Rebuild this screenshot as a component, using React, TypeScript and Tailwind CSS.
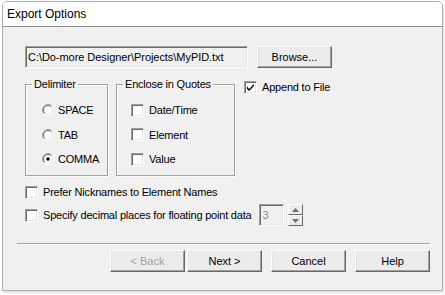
import React from "react";

const btnCls =
  "w-[75px] h-[22px] bg-[#ececec] border border-t-white border-l-white border-b-[#696969] border-r-[#696969] shadow-[inset_-1px_-1px_0_#a0a0a0,inset_1px_1px_0_#e3e3e3] flex items-center justify-center text-[11px] leading-none tracking-normal";

function Radio({ checked }: { checked?: boolean }) {
  return (
    <svg width="12" height="12" viewBox="0 0 12 12" className="shrink-0">
      <circle cx="6" cy="6" r="4.5" fill="#ffffff" />
      <path d="M2.1 9.9 A5.5 5.5 0 0 1 9.9 2.1" fill="none" stroke="#a0a0a0" strokeWidth="1" />
      <path d="M9.9 2.1 A5.5 5.5 0 0 1 2.1 9.9" fill="none" stroke="#ffffff" strokeWidth="1" />
      <path d="M2.8 9.2 A4.5 4.5 0 0 1 9.2 2.8" fill="none" stroke="#696969" strokeWidth="1" />
      <path d="M9.2 2.8 A4.5 4.5 0 0 1 2.8 9.2" fill="none" stroke="#e3e3e3" strokeWidth="1" />
      {checked && <circle cx="6" cy="6" r="1.8" fill="#000000" />}
    </svg>
  );
}

function Check({ checked }: { checked?: boolean }) {
  return (
    <div className="w-[13px] h-[13px] shrink-0 bg-white border border-t-[#a0a0a0] border-l-[#a0a0a0] border-b-white border-r-white shadow-[inset_1px_1px_0_#696969,inset_-1px_-1px_0_#e3e3e3] flex items-center justify-center">
      {checked && (
        <svg width="7" height="7" viewBox="0 0 7 7">
          <path d="M0 2 L0 5 L2 7 L7 2 L7 0 L2 5 Z" fill="#000" />
        </svg>
      )}
    </div>
  );
}

export default function App() {
  return (
    <div
      className="w-[445px] h-[295px] bg-white pt-[1px] pl-[2px] text-black"
      style={{ fontFamily: '"Liberation Sans", Arial, sans-serif' }}
    >
      <div className="w-[441px] h-[290px] border border-[#acacac] rounded-tl-[5px] rounded-tr-[5px] flex flex-col overflow-hidden shadow-[1px_2px_2px_rgba(0,0,0,0.12)]">
        <div className="h-[24px] bg-white pl-[4px] flex items-center text-[12px] border-b border-[#8f8f8f] box-content">
          Export Options
        </div>
        <div className="flex-1 bg-[#f0f0f0] pt-[19px] pl-[14px] pr-[12px] flex flex-col text-[11px] tracking-[-0.2px]">
          <div className="pl-[8px] flex flex-col">
            <div className="flex h-[22px] gap-[9px]">
              <div className="w-[223px] h-[22px] bg-[#f0f0f0] border border-t-[#a0a0a0] border-l-[#a0a0a0] border-b-white border-r-white shadow-[inset_1px_1px_0_#696969,inset_-1px_-1px_0_#e3e3e3] pl-[2px] flex items-center tracking-[-0.05px]">
                C:\Do-more Designer\Projects\MyPID.txt
              </div>
              <div className={btnCls}>Browse...</div>
            </div>
            <div className="flex mt-[10px] gap-[8px] items-start">
              <fieldset className="w-[83px] h-[98px] border border-[#a0a0a0] shadow-[inset_1px_1px_0_#fff,1px_1px_0_#fff] p-0 m-0">
                <legend className="ml-[6px] px-[2px] leading-[13px]">Delimiter</legend>
                <div className="pl-[16px] pt-[7px] flex flex-col">
                  <div className="h-[24.5px] flex items-center gap-[4px]">
                    <Radio />
                    <span>SPACE</span>
                  </div>
                  <div className="h-[24.5px] flex items-center gap-[4px]">
                    <Radio />
                    <span>TAB</span>
                  </div>
                  <div className="h-[24.5px] flex items-center gap-[4px]">
                    <Radio checked />
                    <span>COMMA</span>
                  </div>
                </div>
              </fieldset>
              <fieldset className="w-[119px] h-[98px] border border-[#a0a0a0] shadow-[inset_1px_1px_0_#fff,1px_1px_0_#fff] p-0 m-0">
                <legend className="ml-[6px] px-[2px] leading-[13px]">Enclose in Quotes</legend>
                <div className="pl-[14px] pt-[7px] flex flex-col">
                  <div className="h-[24.5px] flex items-center gap-[5px]">
                    <Check />
                    <span>Date/Time</span>
                  </div>
                  <div className="h-[24.5px] flex items-center gap-[5px]">
                    <Check />
                    <span>Element</span>
                  </div>
                  <div className="h-[24.5px] flex items-center gap-[5px]">
                    <Check />
                    <span>Value</span>
                  </div>
                </div>
              </fieldset>
              <div className="ml-[1px] mt-[1px] flex items-center gap-[5px]">
                <Check checked />
                <span>Append to File</span>
              </div>
            </div>
            <div className="mt-[10px] h-[13px] flex items-center gap-[5px]">
              <Check />
              <span>Prefer Nicknames to Element Names</span>
            </div>
            <div className="mt-[5px] h-[22px] flex items-center">
              <Check />
              <span className="ml-[5px]">Specify decimal places for floating point data</span>
              <div className="ml-[8px] w-[25px] h-[22px] bg-[#f0f0f0] border border-t-[#a0a0a0] border-l-[#a0a0a0] border-b-white border-r-white shadow-[inset_1px_1px_0_#696969,inset_-1px_-1px_0_#e3e3e3] pl-[2px] flex items-center text-[#8a8a8a]">
                3
              </div>
              <div className="ml-[4px] w-[15px] h-[22px] flex flex-col">
                <div className="flex-1 bg-[#ececec] border border-t-white border-l-white border-b-[#696969] border-r-[#696969] flex items-center justify-center">
                  <svg width="7" height="4" viewBox="0 0 7 4">
                    <path d="M3.5 0 L7 4 L0 4 Z" fill="#6d6d6d" />
                  </svg>
                </div>
                <div className="flex-1 bg-[#ececec] border border-t-white border-l-white border-b-[#696969] border-r-[#696969] flex items-center justify-center">
                  <svg width="7" height="4" viewBox="0 0 7 4">
                    <path d="M0 0 L7 0 L3.5 4 Z" fill="#6d6d6d" />
                  </svg>
                </div>
              </div>
            </div>
          </div>
          <div className="mt-[17px] border-t border-[#a0a0a0] border-b border-b-white" />
          <div className="mt-[5px] flex justify-end">
            <div className={btnCls + " text-[#a0a0a0]"}>&lt; Back</div>
            <div className={btnCls + " ml-[2px]"}>Next &gt;</div>
            <div className={btnCls + " ml-[9px]"}>Cancel</div>
            <div className={btnCls + " ml-[9px]"}>Help</div>
          </div>
        </div>
      </div>
    </div>
  );
}
